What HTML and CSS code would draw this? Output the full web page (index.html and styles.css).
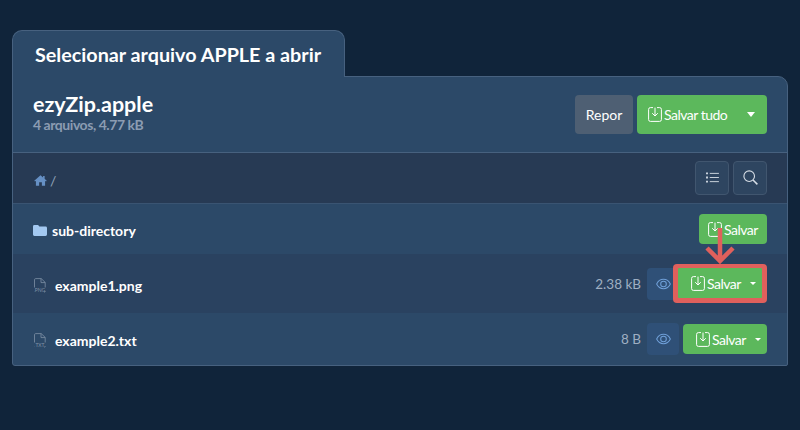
FILE: index.html
```html
<!DOCTYPE html>
<html lang="pt">
<head>
<meta charset="utf-8">
<title>Selecionar arquivo APPLE a abrir</title>
<link rel="stylesheet" href="styles.css">
</head>
<body>
<svg width="0" height="0" class="defs">
  <symbol id="save" viewBox="0 0 14 15"><path d="M5 .6H2.4A1.8 1.8 0 0 0 .6 2.4v10.2a1.8 1.8 0 0 0 1.8 1.8h9.2a1.8 1.8 0 0 0 1.8-1.8V2.4A1.8 1.8 0 0 0 11.600.6H9M7 .6v8.200M4.200 6.200 7 9l2.800-2.800" fill="none" stroke="currentColor" stroke-width="1"/></symbol>
  <symbol id="eye" viewBox="0 0 16 12"><path d="M.7 6C2.200 2.800 4.800 1 8 1s5.800 1.800 7.300 5c-1.500 3.200-4.100 5-7.300 5S2.200 9.200.7 6Z" fill="none" stroke="currentColor" stroke-width="1.100"/><circle cx="8" cy="6" r="3" fill="none" stroke="currentColor" stroke-width="1.100"/></symbol>
  <symbol id="file" viewBox="0 0 14 15"><path d="M1.500 9.500V1.800A1.200 1.200 0 0 1 2.700.6h5.500l4 3.800v5.100M8 .6v4h4.200M12.200 13v.2a1.200 1.200 0 0 1-1 1.100M1.500 13v.2" fill="none" stroke="currentColor" stroke-width=".8"/></symbol>
</svg>
<main class="page">
  <h1 class="tab">Selecionar arquivo APPLE a abrir</h1>
  <section class="panel">
    <header class="head">
      <div>
        <div class="archive">ezyZip.apple</div>
        <div class="meta">4 arquivos, 4.77 kB</div>
      </div>
      <div class="actions">
        <button class="btn reset">Repor</button>
        <button class="btn green all"><svg class="save"><use href="#save"/></svg><span>Salvar tudo</span><i class="caret big"></i></button>
      </div>
    </header>
    <nav class="crumbs">
      <div class="path">
        <svg class="home" viewBox="0 0 14 12"><path d="M7 .3.200 6.200l.8.900L2 6.300V11.700h3.500V8h3v3.700H12V6.300l1 .8.800-.9L11.500 4.200V1H9.800v1.700Z" fill="currentColor"/></svg>
        <span>/</span>
      </div>
      <div class="tools">
        <button class="tool"><svg viewBox="0 0 14 12" class="tool-icon"><path d="M0 1.500h2M0 6h2M0 10.500h2" stroke="currentColor" stroke-width="2"/><path d="M4 1.500h10M4 6h10M4 10.500h10" stroke="currentColor" stroke-width="1"/></svg></button>
        <button class="tool"><svg viewBox="0 0 15 15" class="tool-icon search"><circle cx="6.200" cy="6.200" r="5.300" fill="none" stroke="currentColor" stroke-width="1.100"/><path d="m10 10 4.400 4.400" stroke="currentColor" stroke-width="1.500"/></svg></button>
      </div>
    </nav>
    <div class="row dir">
      <div class="name">
        <svg class="folder" viewBox="0 0 14 11"><path d="M1.400 0h3.700l1.300 1.500h6.200A1.400 1.400 0 0 1 14 2.900v6.700A1.400 1.400 0 0 1 12.600 11H1.400A1.400 1.400 0 0 1 0 9.600V1.400A1.400 1.400 0 0 1 1.400 0Z" fill="currentColor"/></svg>
        <span>sub-directory</span>
      </div>
      <div class="row-actions"><button class="btn green sm"><svg class="save"><use href="#save"/></svg><span>Salvar</span></button></div>
    </div>
    <div class="row alt tall">
      <div class="name file">
        <span class="fileicon"><svg class="doc"><use href="#file"/></svg><small>PNG</small></span>
        <span>example1.png</span>
      </div>
      <div class="row-actions">
        <span class="size">2.38 kB</span>
        <button class="eye"><svg class="eye-icon"><use href="#eye"/></svg></button>
        <div class="mark"><button class="btn green split"><svg class="save"><use href="#save"/></svg><span>Salvar</span><i class="caret"></i></button></div>
      </div>
    </div>
    <div class="row last">
      <div class="name file">
        <span class="fileicon"><svg class="doc"><use href="#file"/></svg><small>TXT</small></span>
        <span>example2.txt</span>
      </div>
      <div class="row-actions">
        <span class="size">8 B</span>
        <button class="eye"><svg class="eye-icon"><use href="#eye"/></svg></button>
        <button class="btn green split"><svg class="save"><use href="#save"/></svg><span>Salvar</span><i class="caret"></i></button>
      </div>
    </div>
    <svg class="arrow" viewBox="0 0 30 37"><path d="M15 1v33M2 21l13 13 13-13" fill="none" stroke="#e0605c" stroke-width="4.500"/></svg>
  </section>
</main>
</body>
</html>
```
FILE: styles.css
```css
* { box-sizing: border-box; }
html, body { margin: 0; height: 100%; }
body {
  background: #10243a;
  font-family: Lato, "Liberation Sans", sans-serif;
  color: #fff;
  overflow: hidden;
}
.defs { position: absolute; }
.page { padding: 30px 12px 0; width: 800px; }
.tab {
  margin: 0 0 -1px;
  width: 333px;
  height: 47px;
  padding: 0 0 0 22px;
  display: flex;
  align-items: center;
  background: #2c4968;
  border: 1px solid #47617f;
  border-bottom: 0;
  border-radius: 10px 10px 0 0;
  font-size: 19.750px;
  font-weight: 700;
  position: relative;
  z-index: 1;
}
.panel {
  position: relative;
  width: 776px;
  background: #2c4968;
  border: 1px solid #47617f;
  border-radius: 0 10px 2px 3px;
}
.head {
  height: 76px;
  padding: 16px 20px 0;
  display: flex;
  justify-content: space-between;
  border-bottom: 1px solid #47617f;
}
.archive { font-size: 21.500px; font-weight: 700; line-height: 22px; }
.meta { font-size: 14px; font-weight: 700; color: #8b9cb2; line-height: 14px; letter-spacing: -.45px; margin-top: 3px; }
.actions { display: flex; gap: 4px; margin-top: 2px; height: 39px; }
.btn {
  border: 0;
  color: #fff;
  font: 14px Lato, "Liberation Sans", sans-serif;
  border-radius: 4px;
  display: flex;
  align-items: center;
  padding: 0;
}
.reset { width: 58px; justify-content: center; background: #4e5f73; }
.green { background: #5cb85c; letter-spacing: -.5px; }
.save { width: 14px; height: 15px; flex: none; margin-right: 2px; }
.all { width: 130px; padding-left: 11px; }
.caret {
  width: 0; height: 0;
  border-style: solid;
  border-color: #fff transparent transparent;
  border-width: 3px 3px 0;
  margin-left: auto;
  margin-right: 6px;
}
.caret.big { border-width: 5px 4px 0; margin-right: 12px; }
.crumbs {
  height: 51px;
  padding: 0 20px;
  display: flex;
  align-items: center;
  justify-content: space-between;
  background: #273a54;
  border-bottom: 1px solid #3a5472;
}
.path { display: flex; align-items: center; gap: 3px; color: #93a5ba; font-size: 14px; margin: 5px 0 0 1px; }
.home { width: 13px; height: 11px; color: #6690c4; }
.tools { display: flex; gap: 4px; margin-top: -1px; }
.tool {
  width: 34px; height: 34px;
  padding: 0;
  display: flex; align-items: center; justify-content: center;
  background: #2e4560;
  border: 1px solid #41566f;
  border-radius: 4px;
  color: #d7dee6;
}
.tool-icon { width: 13px; height: 11px; }
.tool-icon.search { width: 15px; height: 15px; }
.row {
  height: 50px;
  padding: 0 20px;
  display: flex;
  align-items: center;
  justify-content: space-between;
}
.alt { background: #2a4260; }
.tall { height: 59px; }
.last { height: 52px; }
.name { display: flex; align-items: center; gap: 5px; font-size: 14px; font-weight: 700; margin-top: 3px; }
.folder { width: 14px; height: 11px; color: #a3c9f1; }
.fileicon { position: relative; width: 14px; height: 15px; color: #7f91a6; margin-right: 3px; display: block; }
.doc { width: 14px; height: 15px; display: block; }
.fileicon small {
  position: absolute;
  left: 0; right: 0; bottom: 0;
  text-align: center;
  font-size: 5px;
  line-height: 5px;
  font-weight: 400;
  color: #7f91a6;
}
.row-actions { display: flex; align-items: center; gap: 4px; }
.size { color: #9fafc2; font-size: 13.500px; margin-right: 2px; }
.eye {
  width: 32px; height: 32px;
  padding: 0;
  display: flex; align-items: center; justify-content: center;
  background: #2f5077;
  border: 0;
  border-radius: 4px;
  color: #6f9fd8;
}
.eye-icon { width: 15px; height: 12px; }
.sm { height: 30px; width: 68px; padding-left: 9px; }
.split { height: 30px; width: 84px; padding-left: 13px; }
.mark {
  background: #e0605c;
  padding: 4px 5px 5px;
  border-radius: 4px;
  margin-left: -10px;
  position: relative;
}
.mark .btn { border-radius: 1px; }
.arrow {
  position: absolute;
  left: 692px;
  top: 150px;
  width: 30px;
  height: 37px;
}
```
